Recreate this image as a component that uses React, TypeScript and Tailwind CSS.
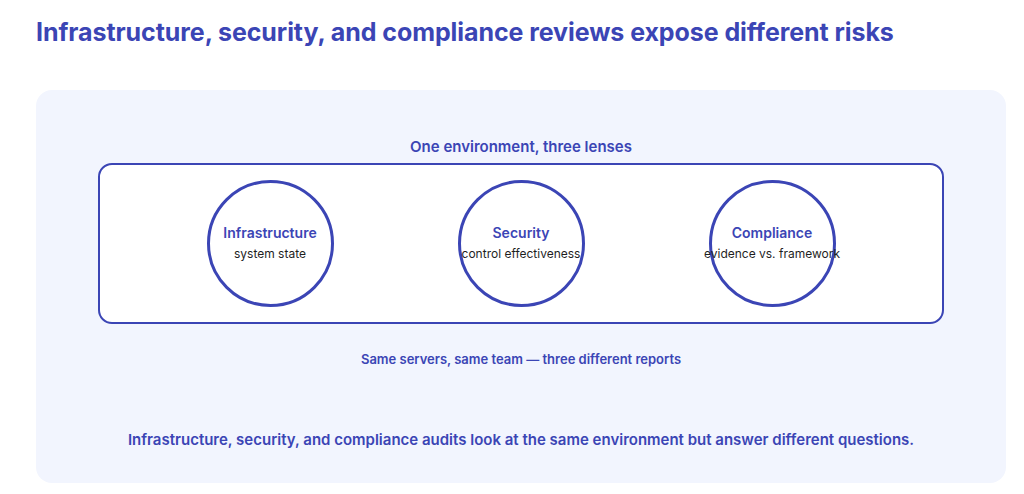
const lenses = [
  { title: 'Infrastructure', sub: 'system state' },
  { title: 'Security', sub: 'control effectiveness' },
  { title: 'Compliance', sub: 'evidence vs. framework' },
];

export default function App() {
  return (
    <div className="h-[494px] overflow-hidden bg-white pl-[36px] pr-[18px] pt-[16px] font-['Inter','Liberation_Sans',sans-serif] text-[#3b45b5]">
      <h1 className="text-[25px] font-bold leading-[32px] tracking-[-0.003em]">Infrastructure, security, and compliance reviews expose different risks</h1>
      <div className="mt-[42px] h-[393px] rounded-[16px] bg-[#f2f5fe] px-[62px] pt-[47px]">
        <p className="text-center text-[15px] font-semibold leading-[20px]">One environment, three lenses</p>
        <div className="mt-[6px] flex h-[161px] items-center justify-center gap-[124px] rounded-[14px] border-2 border-[#3b45b5] bg-white">
          {lenses.map((l) => (
            <div key={l.title} className="flex h-[127px] w-[127px] shrink-0 flex-col items-center justify-center rounded-full border-[3px] border-[#3b45b5] pb-[2px]">
              <span className="whitespace-nowrap text-[14px] font-semibold leading-[18px]">{l.title}</span>
              <span className="mt-[4px] whitespace-nowrap text-[12px] leading-[16px] text-[#1f1f1f]">{l.sub}</span>
            </div>
          ))}
        </div>
        <p className="mt-[26px] text-center text-[13px] font-semibold leading-[18px]">Same servers, same team — three different reports</p>
        <p className="mt-[62px] text-center text-[15px] font-semibold leading-[20px]">Infrastructure, security, and compliance audits look at the same environment but answer different questions.</p>
      </div>
    </div>
  );
}
